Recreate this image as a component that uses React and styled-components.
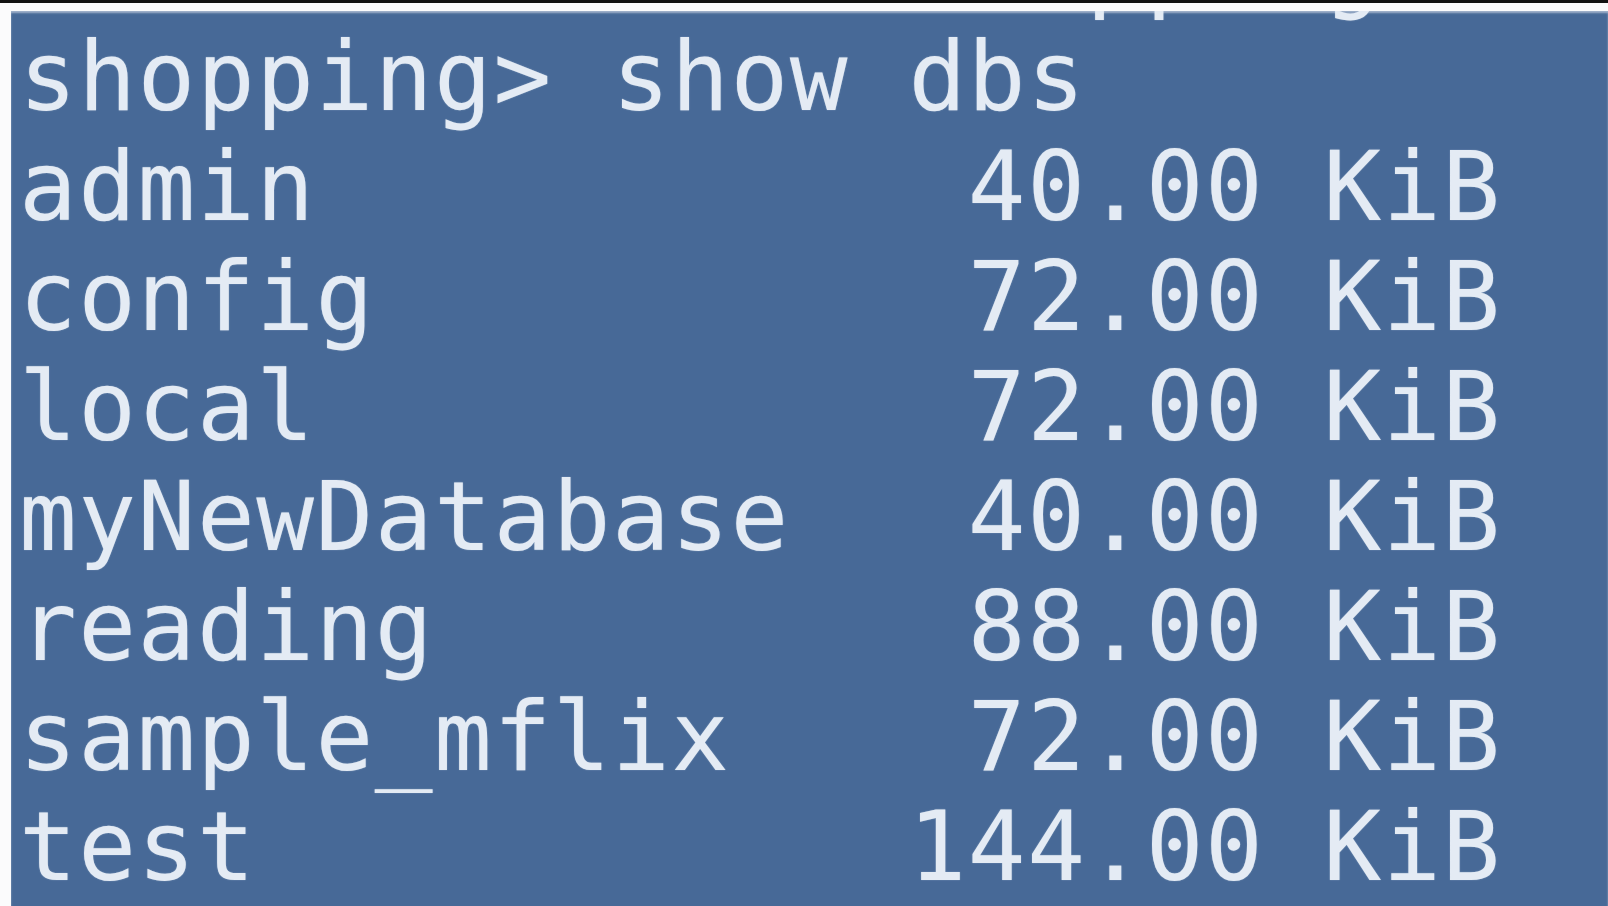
import React from 'react'
import styled, { createGlobalStyle } from 'styled-components'

const CELL = 59.3

const dbs = [
  { name: 'admin', size: '40.00 KiB' },
  { name: 'config', size: '72.00 KiB' },
  { name: 'local', size: '72.00 KiB' },
  { name: 'myNewDatabase', size: '40.00 KiB' },
  { name: 'reading', size: '88.00 KiB' },
  { name: 'sample_mflix', size: '72.00 KiB' },
  { name: 'test', size: '144.00 KiB' },
]

const GlobalStyle = createGlobalStyle`
  html, body {
    margin: 0;
    padding: 0;
    background: #ffffff;
    overflow: hidden;
  }
`

const Screen = styled.div`
  width: 1608px;
  height: 906px;
  display: flex;
  flex-direction: column;
  background: #fbfbfc;
  border-top: 3px solid #121212;
  box-sizing: border-box;
`

const Terminal = styled.div`
  flex: 1;
  margin: 8px 0 0 11px;
  background: #476997;
  box-shadow: inset 0 2px 2px rgba(200, 210, 225, 0.7);
  overflow: hidden;
  padding-left: 8px;
  font-family: "DejaVu Sans Mono", "Liberation Mono", monospace;
  font-size: 96px;
  line-height: 110px;
  letter-spacing: 1.5px;
  color: #e4ebf4;
  text-shadow: 0 0 1.5px rgba(225, 235, 247, 0.45);
`

const Scrollback = styled.div`
  margin-top: -99px;
  display: flex;
  flex-direction: column;
`

const Line = styled.div`
  white-space: pre;
  height: 110px;
`

const Row = styled.div`
  display: flex;
  justify-content: space-between;
  width: ${25 * CELL}px;
  height: 110px;
  white-space: pre;
`

function App()
{
  return (
    <>
      <GlobalStyle />
      <Screen>
        <Terminal>
          <Scrollback>
            <Line>switched to db shopping</Line>
            <Line>shopping&gt; show dbs</Line>
            {dbs.map((db) => (
              <Row key={db.name}>
                <span>{db.name}</span>
                <span>{db.size}</span>
              </Row>
            ))}
          </Scrollback>
        </Terminal>
      </Screen>
    </>
  )
}

export default App
